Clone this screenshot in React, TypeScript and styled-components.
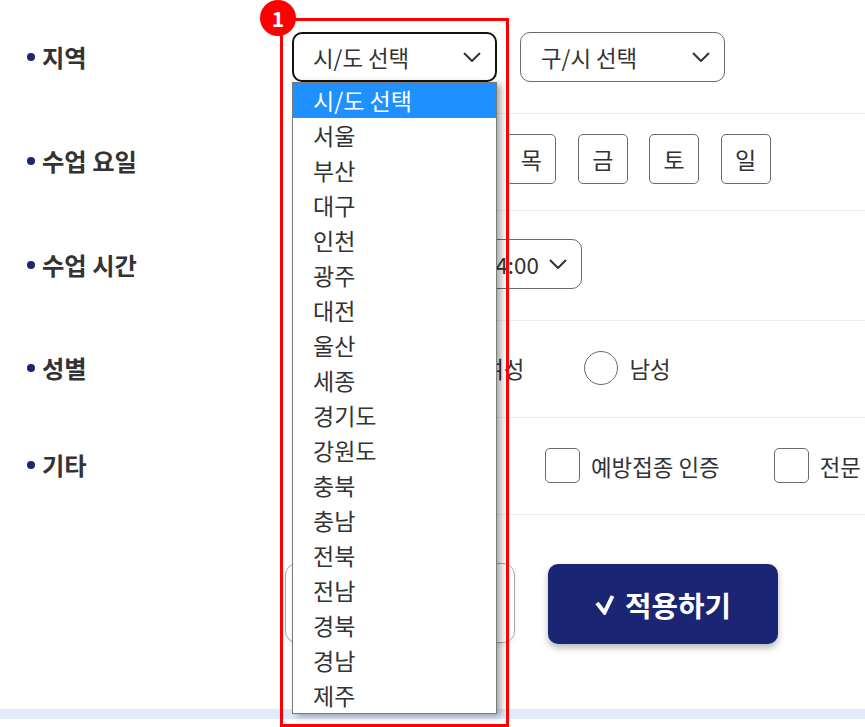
import React, { ReactElement } from 'react';
import styled, { createGlobalStyle } from 'styled-components';

const GlobalStyle = createGlobalStyle`
  html, body {
    margin: 0;
    padding: 0;
    background: #fff;
    font-family: "Noto Sans CJK KR", "Noto Sans", sans-serif;
    color: #333;
  }
  * {
    box-sizing: border-box;
  }
`;

const Page = styled.div`
  position: relative;
  width: 865px;
  height: 727px;
  overflow: hidden;
  background: #fff;
`;

const Row = styled.div<{ $height: number; $top: number }>`
  display: flex;
  align-items: stretch;
  height: ${props => props.$height}px;
  padding-top: ${props => props.$top}px;
`;

const Label = styled.div<{ $offset: number }>`
  flex: 0 0 292px;
  display: flex;
  align-items: center;
  gap: 7px;
  height: 32px;
  margin-top: ${props => props.$offset}px;
  padding-left: 27px;
  font-size: 24.3px;
  font-weight: 700;
  line-height: 32px;
  white-space: nowrap;
`;

const Bullet = styled.span`
  flex: none;
  width: 8px;
  height: 8px;
  border-radius: 50%;
  background: #1a2674;
`;

const Value = styled.div<{ $gap?: number }>`
  flex: 1;
  display: flex;
  align-items: flex-start;
  gap: ${props => props.$gap ?? 0}px;
  border-bottom: 1px solid #eee;
  white-space: nowrap;
`;

const SelectWrap = styled.div`
  position: relative;
`;

const SelectBox = styled.div<{ $width: number; $focused?: boolean }>`
  display: flex;
  align-items: center;
  justify-content: space-between;
  width: ${props => props.$width}px;
  height: 50px;
  padding: 0 14px 0 ${props => (props.$focused ? 19 : 20)}px;
  border: ${props => (props.$focused ? '2px solid #111' : '1px solid #6b6b6b')};
  border-radius: 10px;
  font-size: 22.4px;
  background: #fff;
`;

const Chevron = styled.svg`
  flex: none;
  width: 18px;
  height: 10px;
  margin-bottom: 1px;
  fill: none;
  stroke: #333;
  stroke-width: 2;
`;

const Menu = styled.ul`
  position: absolute;
  z-index: 3;
  top: 50px;
  left: 0;
  width: 205px;
  margin: 0;
  padding: 0;
  list-style: none;
  background: #fff;
  border: 1px solid #7a7a7a;
  box-shadow: 4px 2px 7px rgba(0, 0, 0, 0.35);
`;

const MenuItem = styled.li<{ $active?: boolean }>`
  height: 35px;
  padding-left: 20px;
  font-size: 23px;
  line-height: 35px;
  color: ${props => (props.$active ? '#fff' : '#333')};
  background: ${props => (props.$active ? '#1e90ff' : 'transparent')};
`;

const Tilde = styled.span`
  width: 35px;
  height: 50px;
  line-height: 50px;
  text-align: center;
  font-size: 22.4px;
`;

const DayButton = styled.div`
  display: flex;
  align-items: center;
  justify-content: center;
  width: 50px;
  height: 50px;
  border: 1px solid #6b6b6b;
  border-radius: 5px;
  font-size: 23px;
`;

const Option = styled.label<{ $labelWidth?: number }>`
  display: flex;
  align-items: center;
  gap: 11px;
  font-size: 22.4px;

  span {
    ${props => (props.$labelWidth ? `width: ${props.$labelWidth}px;` : '')}
  }
`;

const Radio = styled.i`
  display: block;
  width: 34px;
  height: 34px;
  border: 1px solid #6b6b6b;
  border-radius: 50%;
`;

const Check = styled.i`
  display: block;
  width: 35px;
  height: 35px;
  border: 1px solid #6b6b6b;
  border-radius: 5px;
`;

const Footer = styled.div`
  display: flex;
  align-items: flex-start;
  gap: 33px;
  padding: 48px 0 0 285px;
  height: 194px;
`;

const ResetButton = styled.div`
  display: flex;
  align-items: center;
  justify-content: center;
  width: 230px;
  height: 80px;
  border: 1px solid #aaa;
  border-radius: 12px;
  font-size: 28.8px;
  font-weight: 700;
  box-shadow: 0 2px 4px rgba(0, 0, 0, 0.08);
`;

const ApplyButton = styled.div`
  display: flex;
  align-items: center;
  justify-content: center;
  gap: 10px;
  width: 230px;
  height: 80px;
  margin-top: 1px;
  border-radius: 10px;
  font-size: 28.8px;
  font-weight: 700;
  color: #fff;
  background: #1a2674;
  box-shadow: 0 4px 7px rgba(0, 0, 0, 0.28);
`;

const CheckMark = styled.svg`
  flex: none;
  width: 20px;
  height: 21px;
  fill: none;
  stroke: #fff;
  stroke-width: 4;
`;

const Band = styled.div`
  height: 10px;
  background: #dfeafb;
`;

const Highlight = styled.div`
  position: absolute;
  z-index: 5;
  top: 18px;
  left: 280px;
  width: 229px;
  height: 709px;
  border: 3px solid #f00;
  pointer-events: none;
`;

const Badge = styled.div`
  position: absolute;
  z-index: 6;
  top: 0;
  left: 260px;
  display: flex;
  align-items: center;
  justify-content: center;
  width: 36px;
  height: 36px;
  border-radius: 50%;
  background: #f00;
  color: #fff;
  font-size: 21px;
  font-weight: 700;
`;

const regions = [
  '시/도 선택', '서울', '부산', '대구', '인천', '광주', '대전', '울산', '세종',
  '경기도', '강원도', '충북', '충남', '전북', '전남', '경북', '경남', '제주',
];
const days = ['월', '화', '수', '목', '금', '토', '일'];

function Arrow(): ReactElement {
  return (
    <Chevron viewBox="0 0 18 10">
      <polyline points="1,1 9,9 17,1" />
    </Chevron>
  );
}

export default function App(): ReactElement {
  return (
    <Page>
      <GlobalStyle />
      <Row $height={114} $top={32}>
        <Label $offset={9}>
          <Bullet />
          지역
        </Label>
        <Value $gap={23}>
          <SelectWrap>
            <SelectBox $width={205} $focused>
              시/도 선택
              <Arrow />
            </SelectBox>
            <Menu>
              {regions.map((region, i) => (
                <MenuItem key={region} $active={i === 0}>
                  {region}
                </MenuItem>
              ))}
            </Menu>
          </SelectWrap>
          <SelectBox $width={205}>
            구/시 선택
            <Arrow />
          </SelectBox>
        </Value>
      </Row>
      <Row $height={97} $top={20}>
        <Label $offset={11}>
          <Bullet />
          수업 요일
        </Label>
        <Value $gap={21.45}>
          {days.map(day => (
            <DayButton key={day}>{day}</DayButton>
          ))}
        </Value>
      </Row>
      <Row $height={110} $top={28}>
        <Label $offset={10}>
          <Bullet />
          수업 시간
        </Label>
        <Value>
          <SelectBox $width={135}>
            10:00
            <Arrow />
          </SelectBox>
          <Tilde>~</Tilde>
          <SelectBox $width={120}>
            14:00
            <Arrow />
          </SelectBox>
        </Value>
      </Row>
      <Row $height={97} $top={30}>
        <Label $offset={1}>
          <Bullet />
          성별
        </Label>
        <Value $gap={60}>
          <Option>
            <Radio />
            <span>전체</span>
          </Option>
          <Option>
            <Radio />
            <span>여성</span>
          </Option>
          <Option>
            <Radio />
            <span>남성</span>
          </Option>
        </Value>
      </Row>
      <Row $height={97} $top={30}>
        <Label $offset={1}>
          <Bullet />
          기타
        </Label>
        <Value $gap={54}>
          <Option $labelWidth={153}>
            <Check />
            <span>성범죄 경력 조회</span>
          </Option>
          <Option>
            <Check />
            <span>예방접종 인증</span>
          </Option>
          <Option>
            <Check />
            <span>전문 자격 인증</span>
          </Option>
        </Value>
      </Row>
      <Footer>
        <ResetButton>초기화</ResetButton>
        <ApplyButton>
          <CheckMark viewBox="0 0 20 21">
            <polyline points="2,9 9.5,18.5 17.5,2" />
          </CheckMark>
          적용하기
        </ApplyButton>
      </Footer>
      <Band />
      <Highlight />
      <Badge>1</Badge>
    </Page>
  );
}
